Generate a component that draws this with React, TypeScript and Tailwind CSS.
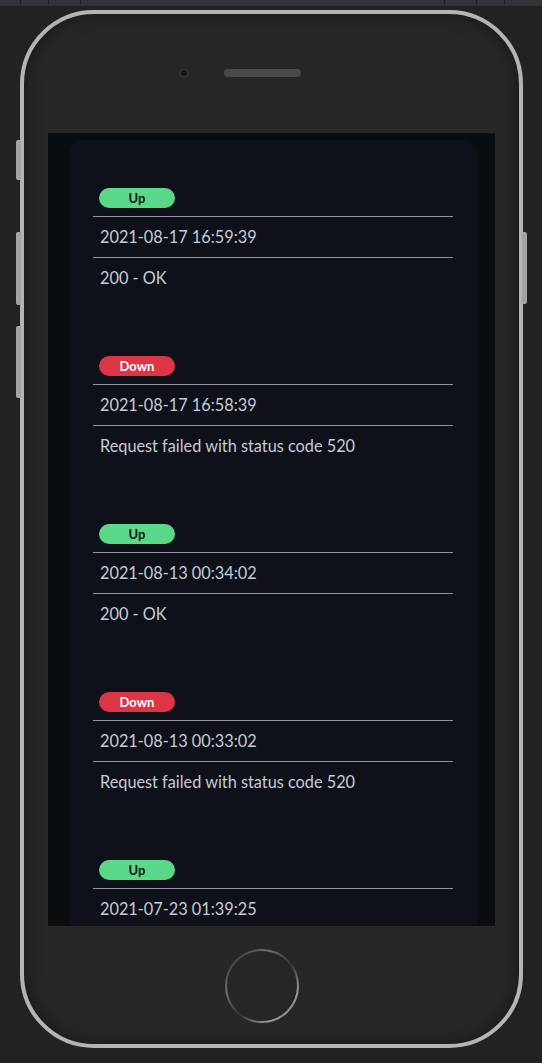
import React from "react";

type Check = { up: boolean; time: string; message?: string };

const checks: Check[] = [
  { up: true, time: "2021-08-17 16:59:39", message: "200 - OK" },
  { up: false, time: "2021-08-17 16:58:39", message: "Request failed with status code 520" },
  { up: true, time: "2021-08-13 00:34:02", message: "200 - OK" },
  { up: false, time: "2021-08-13 00:33:02", message: "Request failed with status code 520" },
  { up: true, time: "2021-07-23 01:39:25" },
];

const Badge = ({ up }: { up: boolean }) =>
  up ? (
    <span className="ml-[6px] flex h-[20px] w-[76px] items-center justify-center rounded-full bg-[#5ad88a] pt-[2px] text-[13px] font-bold text-[#0b1710]">
      Up
    </span>
  ) : (
    <span className="ml-[6px] flex h-[20px] w-[76px] items-center justify-center rounded-full bg-[#dc3545] pt-[2px] text-[13px] font-bold text-white">
      Down
    </span>
  );

const CheckRow = ({ check }: { check: Check }) => (
  <div className="flex flex-col">
    <Badge up={check.up} />
    <div className="mt-[8px] h-px w-[360px] bg-[#8d9199]" />
    <div className="flex h-[40px] items-center pl-[7px] pt-[1px] text-[16.3px]">{check.time}</div>
    {check.message && (
      <>
        <div className="h-px w-[360px] bg-[#8d9199]" />
        <div className="flex h-[40px] items-center pl-[7px] pt-[1px] text-[16.3px]">{check.message}</div>
      </>
    )}
  </div>
);

const Tick = () => <span className="h-[4px] w-px bg-[#1c1c1f]" />;

export default function App() {
  return (
    <div className="min-h-[1063px] w-[542px] overflow-hidden bg-[#222222]">
      {/* top toolbar strip */}
      <div className="flex h-[6px] justify-between bg-[#333438] px-[20px]">
        <div className="flex gap-[27px]">
          <Tick />
          <Tick />
          <span className="ml-[4px] h-[4px] w-px bg-[#1c1c1f]" />
        </div>
        <div className="mr-[17px] flex gap-[27px]">
          <Tick />
          <span className="ml-[4px] h-[4px] w-px bg-[#1c1c1f]" />
          <Tick />
        </div>
      </div>

      {/* phone */}
      <div className="relative ml-[20px] mt-[4px] h-[1038px] w-[503px]">
        {/* side buttons */}
        <span className="absolute -left-[4px] top-[130px] h-[40px] w-[5px] rounded-l-[2px] bg-[#a3a3a3]" />
        <span className="absolute -left-[4px] top-[222px] h-[73px] w-[5px] rounded-l-[2px] bg-[#a3a3a3]" />
        <span className="absolute -left-[4px] top-[316px] h-[72px] w-[5px] rounded-l-[2px] bg-[#a3a3a3]" />
        <span className="absolute -right-[4px] top-[222px] h-[72px] w-[5px] rounded-r-[2px] bg-[#a3a3a3]" />

        <div className="flex h-full w-full flex-col rounded-[74px] border-[4px] border-[#b4b4b4] bg-[#272727] shadow-[inset_0_0_18px_rgba(0,0,0,0.45)]">
          {/* top: camera and speaker */}
          <div className="flex h-[119px] items-start pl-[155px] pt-[54px]">
            <span className="h-[10px] w-[10px] rounded-full border-2 border-[#34343a] bg-[#141418]" />
            <span className="ml-[35px] mt-[1px] h-[8px] w-[77px] rounded-full bg-[#4a4a4a]" />
          </div>

          {/* screen */}
          <div className="mx-[24px] h-[793px] overflow-hidden bg-[#0a0d10]">
            <div
              className="ml-[22px] mt-[7px] flex h-full w-[407px] flex-col gap-[58px] rounded-t-[12px] bg-[#0e1119] pl-[23px] pt-[48px] text-[#c6ccd4]"
              style={{ fontFamily: "'Segoe UI', Lato, 'Noto Sans', sans-serif" }}
            >
              {checks.map((c, i) => (
                <CheckRow key={i} check={c} />
              ))}
            </div>
          </div>

          {/* home button */}
          <div className="flex flex-1 items-start justify-center pr-[19px] pt-[21px]">
            <svg width="78" height="78" viewBox="0 0 78 78">
              <defs>
                <linearGradient id="hb" x1="0" y1="0" x2="1" y2="1">
                  <stop offset="0" stopColor="#2a2a2a" />
                  <stop offset="0.3" stopColor="#6f6f6f" />
                  <stop offset="0.55" stopColor="#333" />
                  <stop offset="0.8" stopColor="#a0a0a0" />
                  <stop offset="1" stopColor="#555" />
                </linearGradient>
              </defs>
              <circle cx="39" cy="39" r="36" fill="#262626" stroke="url(#hb)" strokeWidth="2" />
            </svg>
          </div>
        </div>
      </div>
    </div>
  );
}
